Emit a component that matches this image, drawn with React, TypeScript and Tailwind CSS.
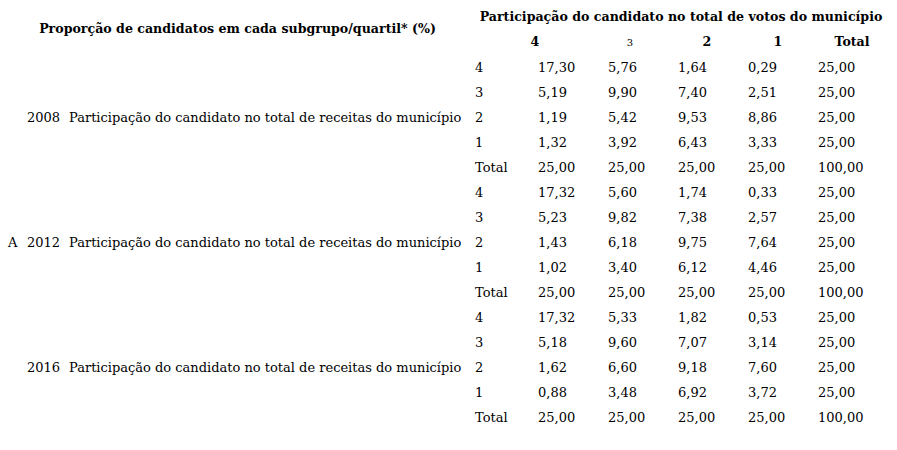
import React from "react";

const groups = [
  {
    year: "2008",
    a: "",
    rows: [
      ["4", "17,30", "5,76", "1,64", "0,29", "25,00"],
      ["3", "5,19", "9,90", "7,40", "2,51", "25,00"],
      ["2", "1,19", "5,42", "9,53", "8,86", "25,00"],
      ["1", "1,32", "3,92", "6,43", "3,33", "25,00"],
      ["Total", "25,00", "25,00", "25,00", "25,00", "100,00"],
    ],
  },
  {
    year: "2012",
    a: "A",
    rows: [
      ["4", "17,32", "5,60", "1,74", "0,33", "25,00"],
      ["3", "5,23", "9,82", "7,38", "2,57", "25,00"],
      ["2", "1,43", "6,18", "9,75", "7,64", "25,00"],
      ["1", "1,02", "3,40", "6,12", "4,46", "25,00"],
      ["Total", "25,00", "25,00", "25,00", "25,00", "100,00"],
    ],
  },
  {
    year: "2016",
    a: "",
    rows: [
      ["4", "17,32", "5,33", "1,82", "0,53", "25,00"],
      ["3", "5,18", "9,60", "7,07", "3,14", "25,00"],
      ["2", "1,62", "6,60", "9,18", "7,60", "25,00"],
      ["1", "0,88", "3,48", "6,92", "3,72", "25,00"],
      ["Total", "25,00", "25,00", "25,00", "25,00", "100,00"],
    ],
  },
];

export default function App() {
  return (
    <div className="w-[897px] h-[450px] bg-white text-black overflow-hidden pl-[8px] font-['DejaVu_Serif',serif]">
      <div className="flex h-[55px]">
        <div className="w-[459px] flex items-center justify-center pt-[3px] text-[12.6px] font-bold whitespace-nowrap">
          Proporção de candidatos em cada subgrupo/quartil* (%)
        </div>
        <div className="flex flex-col w-[428px]">
          <div className="h-[31px] flex items-center justify-center pt-[4px] text-[12.6px] font-bold whitespace-nowrap">
            Participação do candidato no total de votos do município
          </div>
          <div className="flex h-[22px] items-center text-[12.6px] font-bold">
            <div className="ml-[58px] w-[20px] text-center">4</div>
            <div className="ml-[75px] w-[20px] text-center font-normal text-[10px]">3</div>
            <div className="ml-[57px] w-[20px] text-center">2</div>
            <div className="ml-[51px] w-[20px] text-center">1</div>
            <div className="ml-[44px] w-[40px] text-center">Total</div>
          </div>
        </div>
      </div>
      {groups.map((g) => (
        <div key={g.year} className="flex text-[13px] whitespace-nowrap">
          <div className="w-[19px] flex items-center">{g.a}</div>
          <div className="w-[42px] flex items-center">{g.year}</div>
          <div className="w-[406px] flex items-center">Participação do candidato no total de receitas do município</div>
          <div className="flex flex-col">
            {g.rows.map((r, i) => (
              <div key={i} className="flex h-[25px] items-center">
                <div className="w-[63px]">{r[0]}</div>
                <div className="w-[70px]">{r[1]}</div>
                <div className="w-[70px]">{r[2]}</div>
                <div className="w-[70px]">{r[3]}</div>
                <div className="w-[70px]">{r[4]}</div>
                <div className="w-[70px]">{r[5]}</div>
              </div>
            ))}
          </div>
        </div>
      ))}
    </div>
  );
}
